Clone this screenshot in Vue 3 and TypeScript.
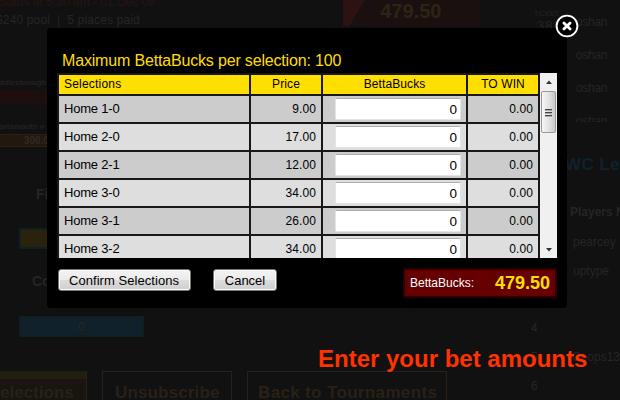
<script setup lang="ts">
interface Row { name: string; price: string; stake: string; win: string }
const rows: Row[] = [
  ['Home 1-0', '9.00'],
  ['Home 2-0', '17.00'],
  ['Home 2-1', '12.00'],
  ['Home 3-0', '34.00'],
  ['Home 3-1', '26.00'],
  ['Home 3-2', '34.00'],
].map(([name, price]) => ({ name, price, stake: '0', win: '0.00' }))
</script>

<template>
  <div class="screen">
    <div class="page" aria-hidden="true">
      <main class="left">
        <div class="top">
          <div class="intro">
            <div class="starts">Starts at 5.30 am - 01 Dec 09</div>
            <div class="pool">$240 pool&nbsp; |&nbsp; 5 places paid</div>
          </div>
          <div class="topbal">479.50</div>
        </div>
        <div class="match">ddlesbrough</div>
        <div class="redbar">0</div>
        <div class="match second">ortsmouth v</div>
        <div class="goldbar">300.00</div>
        <div class="label first">Fi</div>
        <div class="box gold"></div>
        <div class="label corr">Co</div>
        <div class="box blue">0</div>
        <div class="actions">
          <div class="act selected">elections</div>
          <div class="act unsub">Unsubscribe</div>
          <div class="act back">Back to Tournaments</div>
        </div>
      </main>
      <aside class="right">
        <div class="tickets">
          <div class="ids"><span class="ticket">TICKET</span><span class="num">382</span></div>
          <div class="names"><span>oshan</span><span>oshan</span><span>oshan</span><span>oshan</span></div>
        </div>
        <div class="league">WC Le</div>
        <div class="players">Players N</div>
        <div class="player">pearcey</div>
        <div class="player">uptype</div>
        <div class="rank low"><span>4</span></div>
        <div class="rank"><span>5</span><span>Coops13</span></div>
        <div class="rank"><span>6</span></div>
      </aside>
    </div>

    <section class="modal">
      <h1>Maximum BettaBucks per selection: 100</h1>
      <div class="listing">
        <div class="table">
          <div class="row head">
            <div>Selections</div><div>Price</div><div>BettaBucks</div><div>TO WIN</div>
          </div>
          <div v-for="r in rows" :key="r.name" class="row">
            <div class="name">{{ r.name }}</div>
            <div class="n">{{ r.price }}</div>
            <div class="entry"><input :value="r.stake" type="text" /></div>
            <div class="n">{{ r.win }}</div>
          </div>
        </div>
        <div class="scroll">
          <svg class="arrow" viewBox="0 0 17 18"><path d="M6 11L9 7.5L12 11Z" fill="#333" /></svg>
          <div class="thumb"><i></i><i></i><i></i></div>
          <svg class="arrow down" viewBox="0 0 17 18"><path d="M6 8L9 11.5L12 8Z" fill="#333" /></svg>
        </div>
      </div>
      <footer>
        <button class="confirm">Confirm Selections</button>
        <button class="cancel">Cancel</button>
        <div class="balance"><span>BettaBucks:</span><b>479.50</b></div>
      </footer>
      <svg class="close" viewBox="0 0 24 24">
        <circle cx="12" cy="12" r="10.4" fill="#000" stroke="#fff" stroke-width="1.9" />
        <path d="M8.9 8.9L15.1 15.1M15.1 8.9L8.9 15.1" stroke="#fff" stroke-width="2.8" stroke-linecap="round" />
      </svg>
    </section>
    <div class="caption">Enter your bet amounts</div>
  </div>
</template>

<style>
body { margin: 0; overflow: hidden; background: #111; }
</style>
<style scoped>
* { box-sizing: border-box; }
.screen { position: relative; width: 620px; height: 400px; overflow: hidden; background: #111; font-family: "Liberation Sans", Arial, sans-serif; font-size: 13px; color: #000; white-space: nowrap; }
.page { display: flex; height: 400px; color: #252525; }
.left { width: 480px; flex: none; }
.right { width: 140px; flex: none; overflow: hidden; }
.top { display: flex; height: 82px; }
.intro { width: 344px; }
.starts { margin: -7px 0 0 -2px; height: 20px; line-height: 18px; font-size: 12px; color: #2c1211; }
.pool { margin-left: -4px; line-height: 14px; font-size: 12px; letter-spacing: 0.15px; }
.topbal { width: 137px; height: 26px; padding-left: 37px; font-size: 20px; line-height: 22px; font-weight: bold; color: #2c2513; background: linear-gradient(120deg, #2c1212 0 18px, #1b1010 19px); }
.match { height: 8px; line-height: 2px; margin-left: -1px; font-size: 8px; letter-spacing: -0.1px; font-weight: bold; color: #222; }
.redbar { height: 13px; width: 47px; padding-left: 38px; line-height: 13px; font-size: 10px; font-weight: bold; background: #1e0e0e; color: #111; }
.second { height: 31px; line-height: 48px; }
.goldbar { height: 13px; width: 60px; padding-left: 24px; line-height: 11px; font-size: 10px; font-weight: bold; background: #21180f; border: 1px solid #2a210f; border-left: 0; color: #332a25; }
.label { width: 60px; font-size: 14px; font-weight: bold; line-height: 16px; }
.first { margin: 39px 0 0 36px; }
.corr { margin: 24px 0 0 32px; }
.box { margin-left: 19px; width: 125px; height: 21px; border: 2px solid #102020; text-align: center; line-height: 17px; }
.gold { margin-top: 26px; background: #2b220e; }
.blue { margin-top: 27px; background: #10212b; }
.actions { display: flex; margin-top: 34px; font-size: 17px; font-weight: bold; color: #292018; }
.act { height: 45px; border: 1px solid #292018; padding-top: 11px; line-height: 20px; }
.selected { width: 87px; border: 0; border-right: 1px solid #292018; padding-top: 12px; background: linear-gradient(#20200f 0 8px, #1d1317 8px 14px, #16160f 14px); }
.unsub { width: 130px; margin-left: 15px; padding-left: 12px; letter-spacing: 0.15px; }
.back { width: 200px; margin-left: 15px; padding-left: 10px; letter-spacing: 0.35px; }
.tickets { display: flex; height: 155px; padding-top: 10px; }
.ids { width: 96px; padding-left: 54px; height: 18px; overflow: hidden; display: flex; flex-direction: column; }
.ticket { font-size: 7px; line-height: 8px; }
.num { font-size: 13px; line-height: 15px; letter-spacing: 1px; padding-left: 3px; }
.names { display: flex; flex-direction: column; padding-top: 4px; height: 112px; overflow: hidden; font-size: 12px; letter-spacing: -0.3px; }
.names span { height: 33px; flex: none; line-height: 16px; }
.league { padding-left: 85px; line-height: 20px; font-size: 17px; letter-spacing: 0.4px; color: #10212b; font-weight: bold; }
.players { margin: 29px 0 0 90px; line-height: 16px; font-size: 12px; font-weight: bold; }
.player { margin: 14px 0 -1px 93px; line-height: 16px; font-size: 12px; }
.rank { display: flex; height: 29px; padding-left: 51px; line-height: 16px; font-size: 12px; }
.rank.low { margin-top: 42px; }
.rank span:first-child { width: 43px; }
.modal { position: absolute; left: 47px; top: 28px; width: 520px; height: 280px; padding: 21px 10px 0; border-radius: 4px; background: #000; }
h1 { margin: 0; padding-left: 5px; height: 24px; font-size: 16px; line-height: 23px; font-weight: normal; letter-spacing: -0.17px; color: #ffdf00; }
.listing { display: flex; height: 185px; overflow: hidden; }
.table { width: 483px; height: 185px; overflow: hidden; padding: 2px; background: #181818; }
.row { display: grid; grid-template-columns: 190px 70px 143px 70px; width: max-content; column-gap: 2px; height: 26px; margin-bottom: 2px; line-height: 26px; }
.row > div { padding: 0 5px; background: #ccc; }
.row:nth-child(odd) > div { background: #dedede; }
.row.head { height: 19px; line-height: 19px; font-size: 12px; letter-spacing: 0.1px; }
.row.head > div { background: #ffdf00; text-align: center; }
.row.head > div:first-child { text-align: left; letter-spacing: 0.2px; }
.row .name { letter-spacing: -0.2px; }
.row .n { text-align: right; font-size: 12px; letter-spacing: 0.1px; }
.row .entry { padding: 2px 5px 2px 12px; }
input { display: block; width: 126px; height: 22px; margin: 0; padding: 1px 3px; border: 1px solid #e3e3e9; border-top-color: #abadb3; border-radius: 2px; text-align: right; font: 13.5px "Liberation Sans", sans-serif; background: #fff; color: #000; outline: 0; }
.scroll { width: 17px; background: #f0f0f0; display: flex; flex-direction: column; }
.arrow { width: 17px; height: 18px; }
.down { margin-top: auto; }
.thumb { width: 15px; height: 42px; margin-left: 1px; border: 1px solid #999; border-radius: 2px; background: linear-gradient(90deg, #f6f6f6, #e3e3e3 50%, #c8c8cc); display: flex; flex-direction: column; align-items: center; justify-content: center; gap: 2px; }
.thumb i { width: 7px; height: 1px; background: #444; box-shadow: 0 1px #aaa; }
footer { display: flex; padding: 11px 0 0 1px; }
button { height: 22px; padding: 0; margin: 0; border: 1px solid #777; border-radius: 3px; box-shadow: inset 0 0 0 1px #fafafa; background: linear-gradient(#f3f3f3 0, #ebebeb 48%, #dcdcdc 52%, #cecece); font: 13px/19px "Liberation Sans", sans-serif; color: #000; }
.confirm { width: 133px; padding-right: 1px; letter-spacing: 0.05px; }
.cancel { width: 64px; margin-left: 22px; }
.balance { width: 154px; height: 30px; margin: -1px 0 0 126px; padding: 0 5px; border: 2px solid #2b0000; background: #600; color: #fff; display: flex; justify-content: space-between; line-height: 26px; font-size: 12px; }
.balance b { color: #ffdf00; font-size: 18px; }
.close { position: absolute; left: 508px; top: -14px; width: 24px; height: 24px; }
.caption { position: absolute; left: 318px; top: 345px; font-size: 24px; line-height: 28px; font-weight: bold; color: #ff3200; }
</style>
